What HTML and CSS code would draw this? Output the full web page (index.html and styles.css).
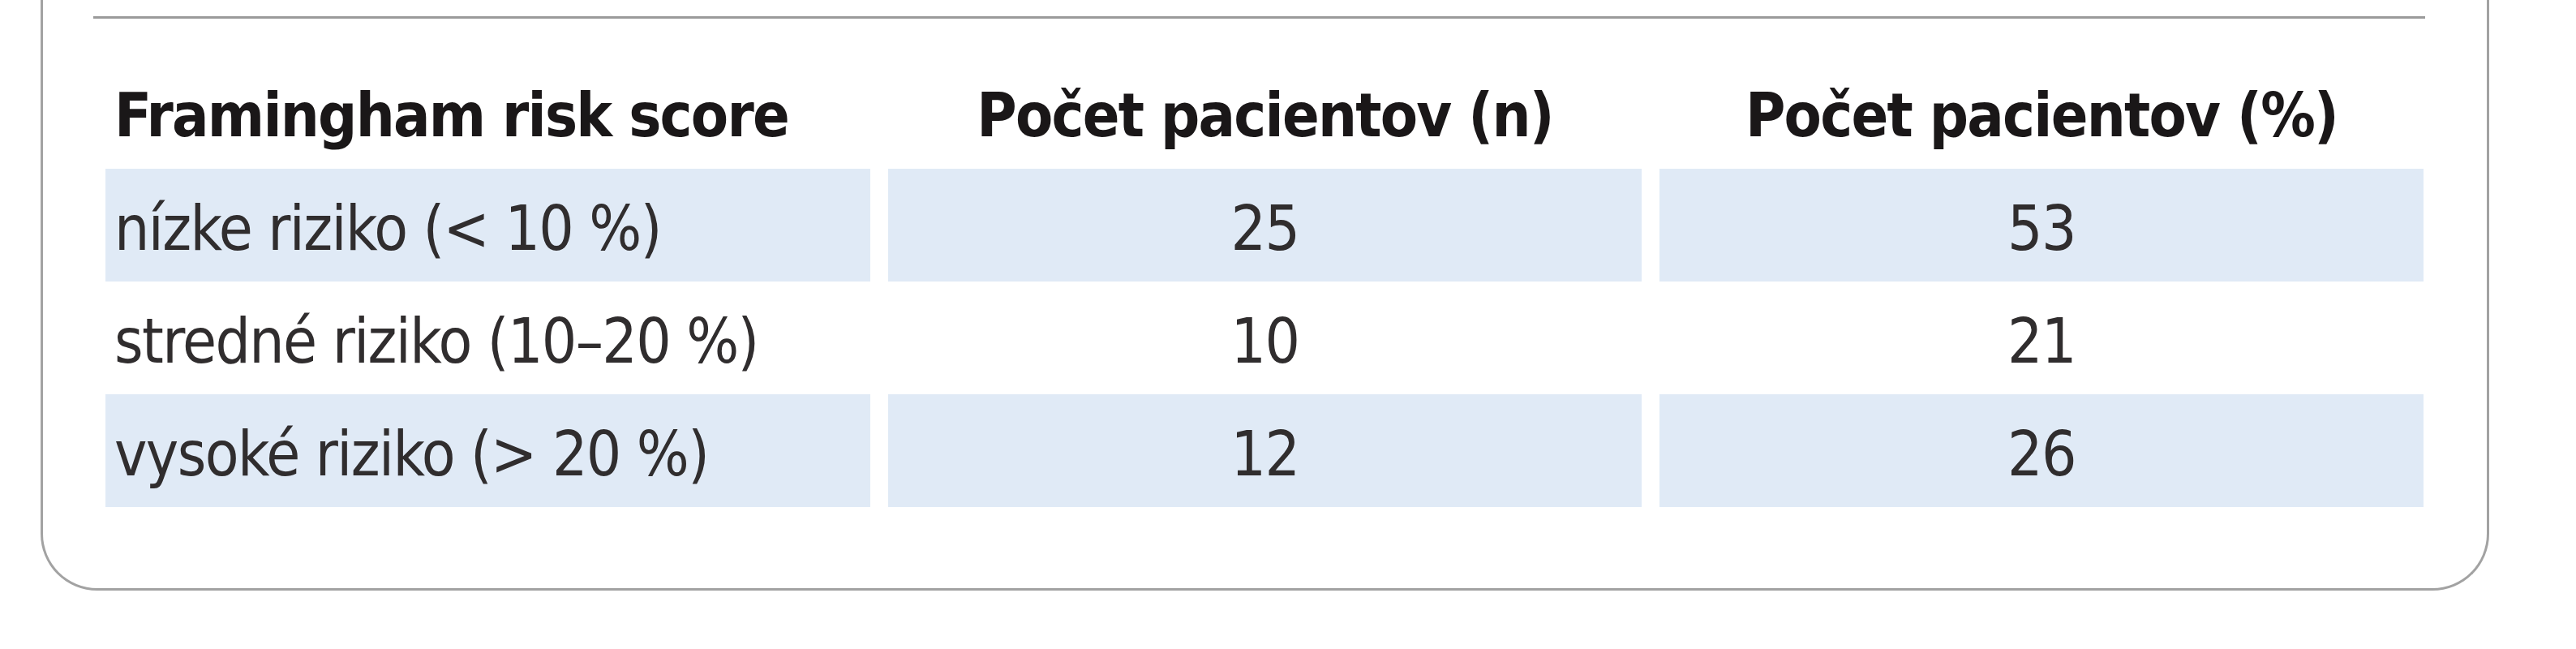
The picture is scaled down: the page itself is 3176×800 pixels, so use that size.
FILE: index.html
```html
<!DOCTYPE html>
<html lang="sk">
<head>
<meta charset="utf-8">
<title>Framingham risk score</title>
<link rel="stylesheet" href="styles.css">
</head>
<body>
<div class="box">
  <div class="rule"></div>
  <div class="table" role="table">
    <div class="row head" role="row">
      <div class="cell first" role="columnheader">Framingham risk score</div>
      <div class="cell num" role="columnheader">Počet pacientov (n)</div>
      <div class="cell num" role="columnheader">Počet pacientov (%)</div>
    </div>
    <div class="row shaded" role="row">
      <div class="cell first" role="cell">nízke riziko (&lt; 10 %)</div>
      <div class="cell num" role="cell">25</div>
      <div class="cell num" role="cell">53</div>
    </div>
    <div class="row" role="row">
      <div class="cell first" role="cell">stredné riziko (10–20 %)</div>
      <div class="cell num" role="cell">10</div>
      <div class="cell num" role="cell">21</div>
    </div>
    <div class="row shaded" role="row">
      <div class="cell first" role="cell">vysoké riziko (&gt; 20 %)</div>
      <div class="cell num" role="cell">12</div>
      <div class="cell num" role="cell">26</div>
    </div>
  </div>
</div>
</body>
</html>
```

FILE: styles.css
```css
html, body {
  margin: 0;
  padding: 0;
  background: #ffffff;
}

body {
  font-family: "DejaVu Sans Condensed", "Liberation Sans", sans-serif;
  color: #302d2e;
}

.box {
  box-sizing: border-box;
  margin-left: 50px;
  width: 3019px;
  border: 3px solid #a2a2a2;
  border-top: none;
  border-radius: 0 0 70px 70px;
  padding: 20px 75px 100px 77px;
}

.rule {
  height: 3px;
  background: #9a9a9a;
  margin: 0 0 46px -15px;
  width: 2875px;
}

.row {
  display: grid;
  grid-template-columns: 943px 929px 942px;
  column-gap: 22px;
  height: 139px;
}

.cell {
  box-sizing: border-box;
  height: 139px;
  padding-top: 8px;
  line-height: 131px;
  font-size: 76px;
  letter-spacing: -1.6px;
  white-space: nowrap;
}

.first {
  padding-left: 11px;
}

.num {
  text-align: center;
}

.head .cell {
  font-weight: bold;
  font-size: 75px;
  letter-spacing: -1.75px;
  color: #1a1718;
}

.shaded .cell {
  background: #e0eaf6;
}
```
